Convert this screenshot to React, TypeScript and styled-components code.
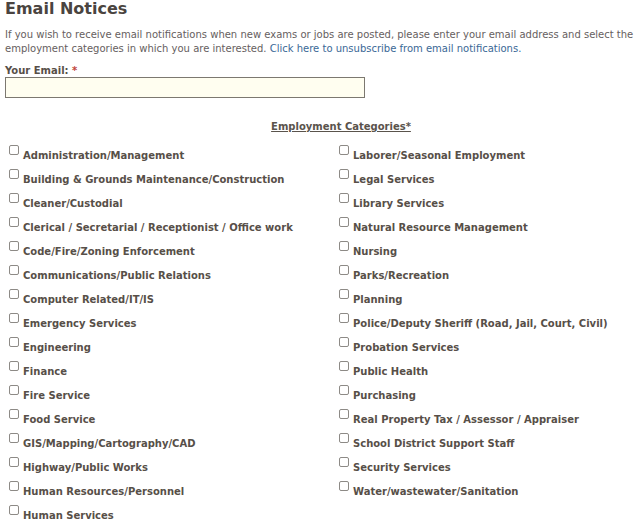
import React from "react";
import styled, { createGlobalStyle } from "styled-components";

const GlobalStyle = createGlobalStyle`
  html, body {
    margin: 0;
    padding: 0;
    background: #ffffff;
  }
  body {
    font-family: "DejaVu Sans", Verdana, sans-serif;
    color: #5a534c;
  }
`;

const Page = styled.div`
  width: 640px;
  height: 525px;
  overflow: hidden;
  padding: 1px 0 0 5px;
  box-sizing: border-box;
`;

const Title = styled.h1`
  margin: 0;
  font-size: 16px;
  line-height: 15px;
  font-weight: bold;
  color: #4a4440;
`;

const Intro = styled.p`
  margin: 12px 0 0 0;
  font-size: 10px;
  line-height: 13.5px;
  color: #666060;
`;

const Link = styled.a`
  color: #3a6896;
  text-decoration: none;
`;

const FieldLabel = styled.label`
  display: block;
  margin-top: 10px;
  font-size: 10px;
  line-height: 12px;
  font-weight: bold;
  color: #574f48;
`;

const Required = styled.span`
  color: #c0443a;
`;

const EmailInput = styled.input`
  display: block;
  box-sizing: border-box;
  width: 360px;
  height: 21px;
  margin: 0;
  border: 1px solid #7c7870;
  background: #fffef0;
  outline: none;
`;

const SectionTitle = styled.div`
  margin-top: 22px;
  padding-left: 37px;
  text-align: center;
  font-size: 10px;
  line-height: 13px;
  font-weight: bold;
  color: #5a534c;
  text-decoration: underline;
`;

const Columns = styled.div`
  display: grid;
  grid-template-columns: 330px 1fr;
  margin-top: 12px;
  padding-left: 3px;
`;

const List = styled.div`
  display: flex;
  flex-direction: column;
`;

const Item = styled.label`
  display: flex;
  align-items: flex-start;
  height: 24px;
`;

const Box = styled.input.attrs({ type: "checkbox" })`
  appearance: none;
  -webkit-appearance: none;
  width: 10px;
  height: 10px;
  margin: 0 4px 0 1px;
  border: 1px solid #8d8a86;
  border-radius: 2px;
  background: #fff;
  flex: none;
`;

const ItemText = styled.span`
  margin-top: 4px;
  font-size: 10px;
  line-height: 13px;
  font-weight: bold;
  color: #574f48;
  white-space: nowrap;
`;

const left = [
  "Administration/Management",
  "Building & Grounds Maintenance/Construction",
  "Cleaner/Custodial",
  "Clerical / Secretarial / Receptionist / Office work",
  "Code/Fire/Zoning Enforcement",
  "Communications/Public Relations",
  "Computer Related/IT/IS",
  "Emergency Services",
  "Engineering",
  "Finance",
  "Fire Service",
  "Food Service",
  "GIS/Mapping/Cartography/CAD",
  "Highway/Public Works",
  "Human Resources/Personnel",
  "Human Services",
];

const right = [
  "Laborer/Seasonal Employment",
  "Legal Services",
  "Library Services",
  "Natural Resource Management",
  "Nursing",
  "Parks/Recreation",
  "Planning",
  "Police/Deputy Sheriff (Road, Jail, Court, Civil)",
  "Probation Services",
  "Public Health",
  "Purchasing",
  "Real Property Tax / Assessor / Appraiser",
  "School District Support Staff",
  "Security Services",
  "Water/wastewater/Sanitation",
];

function Category({ name }: { name: string }) {
  return (
    <Item>
      <Box />
      <ItemText>{name}</ItemText>
    </Item>
  );
}

export default function App() {
  return (
    <>
      <GlobalStyle />
      <Page>
        <Title>Email Notices</Title>
        <Intro>
          If you wish to receive email notifications when new exams or jobs are
          posted, please enter your email address and select the employment
          categories in which you are interested.{" "}
          <Link href="#">Click here to unsubscribe from email notifications.</Link>
        </Intro>
        <FieldLabel>
          Your Email: <Required>*</Required>
        </FieldLabel>
        <EmailInput type="text" />
        <SectionTitle>Employment Categories*</SectionTitle>
        <Columns>
          <List>
            {left.map((n) => (
              <Category key={n} name={n} />
            ))}
          </List>
          <List>
            {right.map((n) => (
              <Category key={n} name={n} />
            ))}
          </List>
        </Columns>
      </Page>
    </>
  );
}
